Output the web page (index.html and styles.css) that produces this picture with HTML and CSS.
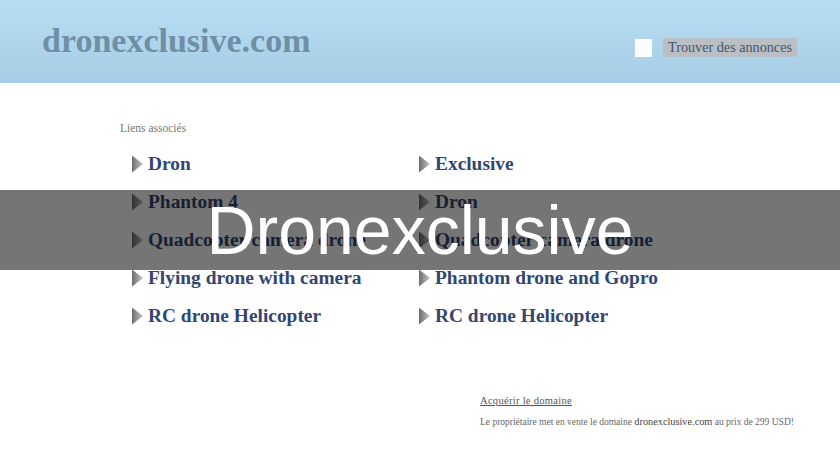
FILE: index.html
```html
<!DOCTYPE html>
<html lang="fr">
<head>
<meta charset="utf-8">
<title>dronexclusive.com</title>
<link rel="stylesheet" href="styles.css">
</head>
<body>
<header class="top">
  <div class="logo">dronexclusive.com</div>
  <div class="search">
    <span class="box"></span>
    <span class="btn">Trouver des annonces</span>
  </div>
</header>
<main class="content">
  <div class="label">Liens associés</div>
  <div class="links">
    <a class="link" href="#">Dron</a>
    <a class="link" href="#">Exclusive</a>
    <a class="link" href="#">Phantom 4</a>
    <a class="link" href="#">Dron</a>
    <a class="link" href="#">Quadcopter camera drone</a>
    <a class="link" href="#">Quadcopter camera drone</a>
    <a class="link" href="#">Flying drone with camera</a>
    <a class="link" href="#">Phantom drone and Gopro</a>
    <a class="link" href="#">RC drone Helicopter</a>
    <a class="link" href="#">RC drone Helicopter</a>
  </div>
  <div class="sale">
    <a class="buy" href="#">Acquérir le domaine</a>
    <p class="note">Le propriétaire met en vente le domaine <b>dronexclusive.com</b> au prix de 299 USD!</p>
  </div>
</main>
<div class="banner">Dronexclusive</div>
</body>
</html>
```
FILE: styles.css
```css
html, body {
  margin: 0;
  padding: 0;
  background: #ffffff;
  width: 840px;
  height: 460px;
  overflow: hidden;
}
body {
  font-family: "Liberation Serif", "DejaVu Serif", serif;
  position: relative;
}
.top {
  height: 83px;
  background: linear-gradient(#b6def4, #a8cde6);
  display: flex;
  align-items: flex-start;
  justify-content: space-between;
  box-sizing: border-box;
  padding: 21px 43px 0 42px;
}
.logo {
  font-size: 34px;
  font-weight: bold;
  color: #6f8fa5;
  line-height: 40px;
}
.search {
  display: flex;
  align-items: center;
  gap: 11px;
  margin-top: 17px;
}
.box {
  width: 17px;
  height: 18px;
  background: #fbfdff;
}
.btn {
  background: #b9bfc4;
  color: #465468;
  font-size: 14.2px;
  line-height: 19px;
  padding: 0 5px;
}
.content {
  padding: 37px 0 0 120px;
}
.label {
  font-size: 11.5px;
  color: #777;
  line-height: 16px;
}
.links {
  display: grid;
  grid-template-columns: 287px 287px;
  grid-auto-rows: 38px;
  margin: 9px 0 0 12px;
}
.link {
  display: flex;
  align-items: center;
  gap: 5px;
  font-size: 19.4px;
  font-weight: bold;
  color: #33466f;
  text-decoration: none;
  height: 38px;
}
.link::before {
  content: "";
  width: 11px;
  height: 17px;
  background: linear-gradient(90deg, #6d6d6d, #c4c4c4);
  clip-path: polygon(0 0, 100% 50%, 0 100%);
}
.sale {
  margin: 55px 0 0 360px;
}
.buy {
  font-size: 10.5px;
  color: #555;
  text-decoration: underline;
  letter-spacing: 0.3px;
}
.note {
  margin: 8px 0 0;
  font-size: 9.5px;
  color: #666;
}
.note b {
  font-weight: normal;
  color: #444;
  font-size: 10.3px;
}
.banner {
  position: absolute;
  left: 0;
  top: 190px;
  width: 840px;
  height: 80px;
  background: rgba(0, 0, 0, 0.54);
  color: #ffffff;
  font-family: "Liberation Sans", Arial, sans-serif;
  font-size: 68px;
  line-height: 80px;
  text-align: center;
}
```
